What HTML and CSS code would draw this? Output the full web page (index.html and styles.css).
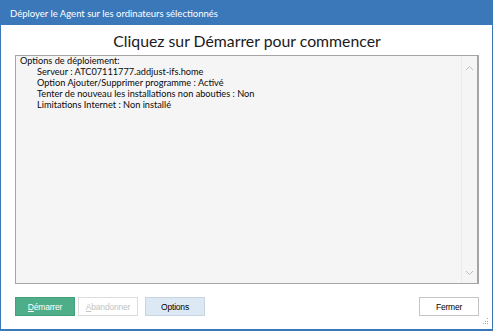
FILE: index.html
```html
<!DOCTYPE html>
<html lang="fr">
<head>
  <meta charset="UTF-8">
  <title>Déployer le Agent</title>
  <link rel="stylesheet" href="styles.css">
</head>
<body>
  <div class="window">
    <!-- Title bar -->
    <div class="titlebar">Déployer le Agent sur les ordinateurs sélectionnés</div>

    <div class="content">
      <h1 class="heading">Cliquez sur Démarrer pour commencer</h1>

      <!-- Log box -->
      <div class="logbox">
        <div class="log-text">
          <div>Options de déploiement:</div>
          <div class="indent">Serveur : ATC07111777.addjust-ifs.home</div>
          <div class="indent">Option Ajouter/Supprimer programme : Activé</div>
          <div class="indent">Tenter de nouveau les installations non abouties : Non</div>
          <div class="indent">Limitations Internet : Non installé</div>
        </div>
        <div class="scrollbar">
          <svg width="9" height="6" viewBox="0 0 9 6"><path d="M1 5 L4.5 1.5 L8 5" fill="none" stroke="#bdbdbd" stroke-width="1"/></svg>
          <svg width="9" height="6" viewBox="0 0 9 6"><path d="M1 1 L4.5 4.5 L8 1" fill="none" stroke="#bdbdbd" stroke-width="1"/></svg>
        </div>
      </div>

      <!-- Buttons -->
      <div class="buttons">
        <button class="btn btn-start"><u>D</u>émarrer</button>
        <button class="btn btn-disabled"><u>A</u>bandonner</button>
        <button class="btn btn-options">Options</button>
        <button class="btn btn-close">Fermer</button>
      </div>
    </div>

    <span class="grip">
      <svg width="7" height="7" viewBox="0 0 7 7">
        <rect x="5" y="0" width="1" height="1" fill="#a8a8a8"/>
        <rect x="3" y="3" width="1" height="1" fill="#a8a8a8"/>
        <rect x="5" y="3" width="1" height="1" fill="#a8a8a8"/>
        <rect x="1" y="5" width="1" height="1" fill="#a8a8a8"/>
        <rect x="3" y="5" width="1" height="1" fill="#a8a8a8"/>
        <rect x="5" y="5" width="1" height="1" fill="#a8a8a8"/>
      </svg>
    </span>
  </div>
</body>
</html>
```

FILE: styles.css
```css
/* Global */
body {
  margin: 0;
  background-color: #ffffff;
  font-family: Lato, 'Noto Sans', sans-serif;
}

/* Window frame */
.window {
  position: relative;
  width: 493px;
  height: 331px;
  box-sizing: border-box;
  border: 1px solid #3b78b9;
  border-top: none;
  border-bottom-width: 2px;
  background-color: #ffffff;
  display: flex;
  flex-direction: column;
}

.titlebar {
  height: 25px;
  margin: 0 -1px;
  padding-left: 10px;
  background-color: #3b78b9;
  color: #ffffff;
  font-size: 9.5px;
  line-height: 28px;
}

.content {
  flex: 1;
  display: flex;
  flex-direction: column;
  padding: 0 13px 0 14px;
}

.heading {
  margin: 0;
  height: 30px;
  font-weight: 400;
  font-size: 15.8px;
  line-height: 32px;
  text-align: center;
  color: #1a1a1a;
}

/* Log box */
.logbox {
  height: 229px;
  box-sizing: border-box;
  border: 1px solid #a5a5a5;
  border-right-width: 2px;
  background-color: #f5f5f5;
  display: flex;
}

.log-text {
  flex: 1;
  padding: 0 0 0 4px;
  margin-top: -1px;
  font-size: 9.2px;
  line-height: 11px;
  color: #0a0a0a;
}

.log-text .indent {
  padding-left: 17px;
}

.scrollbar {
  width: 15px;
  border-left: 1px solid #ececec;
  display: flex;
  flex-direction: column;
  justify-content: space-between;
  align-items: center;
  padding: 9px 0 7px;
}

/* Buttons */
.buttons {
  display: flex;
  gap: 3px;
  margin-top: 13px;
}

.btn {
  width: 60px;
  height: 19px;
  padding: 0;
  box-sizing: border-box;
  font-family: 'Liberation Sans', Arial, sans-serif;
  font-size: 8.5px;
  letter-spacing: -0.2px;
  border: 1px solid #cfcfcf;
  background-color: #ffffff;
  color: #000000;
}

.btn-start {
  background-color: #4eae89;
  border-color: #45a07d;
  color: #ffffff;
}

.btn-disabled {
  color: #c4c4c4;
  border-color: #dcdcdc;
}

.btn-options {
  margin-left: 4px;
  background-color: #dde8f5;
  border-color: #c8d4e2;
}

.btn-close {
  margin-left: auto;
  border-color: #c4c4c4;
}

.grip {
  position: absolute;
  right: 3px;
  bottom: 4px;
  line-height: 0;
}
```
